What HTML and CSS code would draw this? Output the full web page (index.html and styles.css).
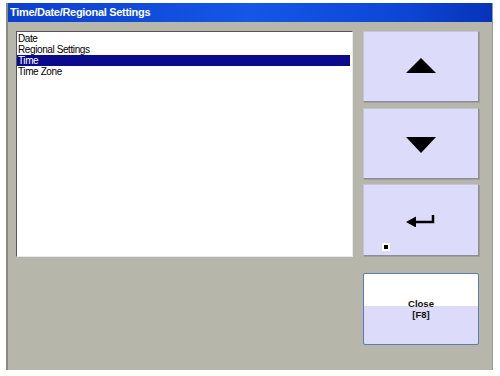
FILE: index.html
```html
<!DOCTYPE html>
<html lang="en">
  <head>
    <meta charset="UTF-8" />
    <title>Time/Date/Regional Settings</title>
    <link rel="stylesheet" href="styles.css">
  </head>
  <body>
    <div class="window">
      <div class="titlebar">Time/Date/Regional Settings</div>
      <div class="content">
        <ul class="listbox">
          <li>Date</li>
          <li>Regional Settings</li>
          <li class="selected">Time</li>
          <li>Time Zone</li>
        </ul>
        <div class="buttons">
          <button class="btn btn-up" type="button">
            <svg width="32" height="15" viewBox="0 0 32 15"><polygon points="16,0 31,15 1,15" fill="#000"/></svg>
          </button>
          <button class="btn btn-down" type="button">
            <svg width="32" height="16" viewBox="0 0 32 16"><polygon points="1,0 31,0 16,16" fill="#000"/></svg>
          </button>
          <button class="btn btn-enter" type="button">
            <svg width="30" height="12" viewBox="0 0 30 12"><path d="M27 0 V7 H9" fill="none" stroke="#000" stroke-width="2.5"/><polygon points="0,7 10,1.5 10,12.5" fill="#000"/></svg>
            <span class="marker"></span>
          </button>
          <button class="btn btn-close" type="button">Close<br>[F8]</button>
        </div>
      </div>
    </div>
  </body>
</html>
```

FILE: styles.css
```css
body {
  margin: 0;
  background: #ffffff;
  font-family: "Liberation Sans", Arial, sans-serif;
}
.window {
  margin: 3px 6px 0 6px;
  width: 487px;
  height: 367px;
  background: #b6b6aa;
  border-left: 2px solid #8a8a80;
  border-right: 1px solid #9a9a90;
  box-sizing: border-box;
}
.titlebar {
  height: 19px;
  background: linear-gradient(to right, #0b3fd0 0%, #1556e6 50%, #0d47d8 80%, #0733b8 100%);
  color: #ffffff;
  font-weight: bold;
  font-size: 11px;
  letter-spacing: -0.3px;
  line-height: 19px;
  padding-left: 2px;
}
.content {
  display: flex;
  gap: 10px;
  padding: 9px 0 0 8px;
}
.listbox {
  list-style: none;
  margin: 0;
  padding: 1px 0 0 0;
  width: 337px;
  height: 226px;
  box-sizing: border-box;
  background: #ffffff;
  border: 1px solid;
  border-color: #555555 #e8e8e8 #e8e8e8 #555555;
  font-size: 10px;
  letter-spacing: -0.4px;
}
.listbox li {
  height: 11px;
  line-height: 11px;
  padding-left: 1px;
  margin-right: 2px;
  color: #000000;
}
.listbox li.selected {
  background: #0a0a8c;
  color: #ffffff;
}
.buttons {
  display: flex;
  flex-direction: column;
  width: 116px;
}
.btn {
  position: relative;
  height: 71px;
  background: #dcdcfa;
  border: 1px solid;
  border-color: #c4c4d8 #8c8c9c #8c8c9c #c4c4d8;
  box-shadow: 1px 1px 0 #a0a098;
  padding: 0;
  display: flex;
  align-items: center;
  justify-content: center;
  box-sizing: border-box;
}
.btn-up {
  margin-bottom: 6px;
}
.btn-up svg {
  margin-top: -2px;
}
.btn-down {
  margin-bottom: 5px;
}
.btn-down svg {
  margin-top: 2px;
}
.btn-enter {
  height: 72px;
  margin-bottom: 17px;
}
.btn-enter svg {
  margin-top: 2px;
}
.marker {
  position: absolute;
  left: 18px;
  bottom: 4px;
  width: 4px;
  height: 4px;
  background: #000000;
  border: 2px solid #ffffff;
}
.btn-close {
  height: 72px;
  border: 1px solid #5a7cb0;
  border-radius: 2px;
  background: linear-gradient(to bottom, #ffffff 0%, #ffffff 46%, #dcdcfa 46%, #dcdcfa 100%);
  box-shadow: none;
  font-family: "Liberation Sans", sans-serif;
  font-weight: bold;
  font-size: 9.5px;
  line-height: 11px;
  color: #111111;
  text-align: center;
  padding-top: 0;
}
```
